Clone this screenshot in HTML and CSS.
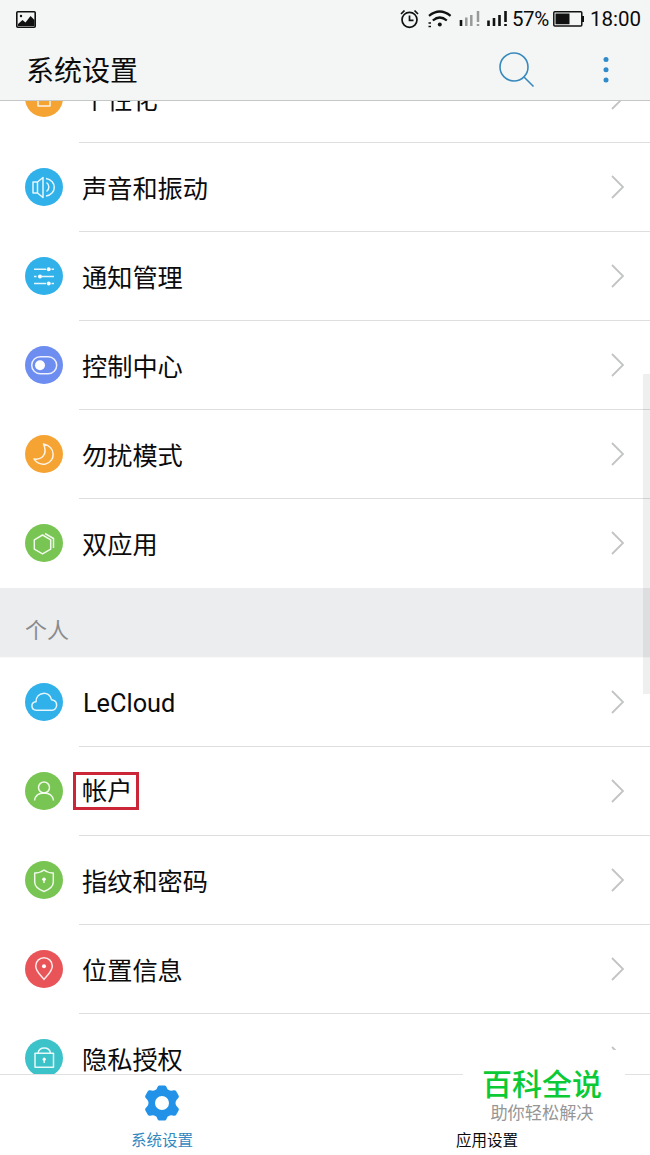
FILE: index.html
```html
<!DOCTYPE html>
<html lang="zh-CN">
<head>
<meta charset="utf-8">
<title>系统设置</title>
<link rel="stylesheet" href="styles.css">
</head>
<body>
<div class="screen">
  <header class="header">
    <div class="status">
      <svg class="photo" width="20" height="17" viewBox="0 0 20 17"><rect x=".8" y=".8" width="18.4" height="15.4" rx="1" fill="none" stroke="#111" stroke-width="1.6"/><circle cx="5" cy="5" r="1.2" fill="#111"/><path d="M2 15V13l4.500-4 3 2.500L14.500 5 18.500 9v6z" fill="#111"/></svg>
      <svg class="status-icons" width="120" height="22" viewBox="0 0 120 22" fill="none" stroke="#111">
        <circle cx="12.500" cy="11.800" r="7.500" stroke-width="1.700"/><path d="M12.500 7.500v4.800h4M4 6l3.500-3.500M21 6l-3.500-3.500" stroke-width="1.700"/>
        <path d="M32 7.800Q42.800-.8 53.600 7.800M35.800 12.500Q42.800 6.500 49.800 12.500" stroke-width="2.200"/><circle cx="42.800" cy="16.500" r="2" fill="#111" stroke="none"/><path d="M31.500 15h2.500M31.500 18.500h2.500" stroke-width="1.500"/>
        <path d="M64 12v6" stroke-width="2.600"/><path d="M69.300 9.500V18M74.300 7V18M81 3v11M81 16v2" stroke="#999" stroke-width="2.500"/>
        <path d="M91.500 12.500V18M97 10v8M102.500 7v11M108.500 3v11M108.500 16v2" stroke-width="2.600"/>
      </svg>
      <span class="percent">57%</span>
      <svg class="battery" width="32" height="16" viewBox="0 0 32 16"><rect x=".8" y=".8" width="28" height="14.200" rx="1" fill="none" stroke="#111" stroke-width="1.500"/><path d="M2.500 2.500h14v10.800h-14zM29 5h2v6h-2z" fill="#111"/></svg>
      <span class="clock">18:00</span>
    </div>
    <div class="title-bar">
      <h1 class="title">系统设置</h1>
      <svg class="search" width="38" height="38" viewBox="0 0 38 38" fill="none" stroke="#3989bd" stroke-width="1.600"><circle cx="16" cy="16" r="14"/><path d="M26 26l9.500 9.500"/></svg>
      <svg class="more" width="6" height="28" viewBox="0 0 6 28" fill="#2f8bca"><circle cx="3" cy="3.500" r="2.500"/><circle cx="3" cy="13.800" r="2.500"/><circle cx="3" cy="24" r="2.500"/></svg>
    </div>
  </header>

  <main class="content">
    <div class="list">
      <div class="row"><svg class="icon orange" viewBox="0 0 38 38"><rect x="13" y="12" width="12" height="15"/></svg><div class="cell"><span class="label">个性化</span><svg class="chevron" viewBox="0 0 14 24"><path d="M1 1l11 11L1 23"/></svg></div></div>
      <div class="row"><svg class="icon blue" viewBox="0 0 38 38"><path d="M8 14h4.500l5.500-4.500v20L12.500 25H8zM12.500 14v11M21.500 14.500a5.500 5.500 0 0 1 0 9M21 10.500c11 1.500 11 16 0 17.500"/></svg><div class="cell"><span class="label">声音和振动</span><svg class="chevron" viewBox="0 0 14 24"><path d="M1 1l11 11L1 23"/></svg></div></div>
      <div class="row"><svg class="icon blue" viewBox="0 0 38 38"><path d="M9 12.300h12M26.500 12.300h2.500M9 19.500h2.500M17 19.500h12M9 26.500h12M26.500 26.500h2.500"/><g fill="#fff" stroke="none"><circle cx="23.700" cy="12.300" r="2"/><circle cx="15" cy="19.500" r="2"/><circle cx="23.700" cy="26.500" r="2"/></g></svg><div class="cell"><span class="label">通知管理</span><svg class="chevron" viewBox="0 0 14 24"><path d="M1 1l11 11L1 23"/></svg></div></div>
      <div class="row"><svg class="icon indigo" viewBox="0 0 38 38"><rect x="6.700" y="10.800" width="25" height="17" rx="8.500"/><circle cx="15" cy="19.300" r="5" fill="#fff" stroke="none"/></svg><div class="cell"><span class="label">控制中心</span><svg class="chevron" viewBox="0 0 14 24"><path d="M1 1l11 11L1 23"/></svg></div></div>
      <div class="row"><svg class="icon orange" viewBox="0 0 38 38"><path d="M18.500 9C31 11.500 31 26.500 20.500 29c-5 1-9.500-1.500-11.500-5 8 1 14-5 9.500-15z"/></svg><div class="cell"><span class="label">勿扰模式</span><svg class="chevron" viewBox="0 0 14 24"><path d="M1 1l11 11L1 23"/></svg></div></div>
      <div class="row last"><svg class="icon green" viewBox="0 0 38 38"><path d="M17.500 11l8.200 4.800v9.300l-8.200 4.800-8.200-4.800v-9.300zM20 9.500l8.500 5V24"/></svg><div class="cell"><span class="label">双应用</span><svg class="chevron" viewBox="0 0 14 24"><path d="M1 1l11 11L1 23"/></svg></div></div>
    </div>
    <h2 class="section">个人</h2>
    <div class="list">
      <div class="row"><svg class="icon blue" viewBox="0 0 38 38"><path d="M11.500 27.200c-6 0-6-8.200-.5-8.500 0-10.500 14-11 15.500-2 7.500 1 6 10.500.5 10.500z"/></svg><div class="cell"><span class="label latin">LeCloud</span><svg class="chevron" viewBox="0 0 14 24"><path d="M1 1l11 11L1 23"/></svg></div></div>
      <div class="row"><svg class="icon green" viewBox="0 0 38 38"><circle cx="19" cy="15.500" r="5.500"/><path d="M9.500 28.500c.7-4.500 4-7.500 9.500-7.500s8.800 3 9.500 7.500"/></svg><div class="cell"><span class="label marked">帐户</span><svg class="chevron" viewBox="0 0 14 24"><path d="M1 1l11 11L1 23"/></svg></div></div>
      <div class="row"><svg class="icon green" viewBox="0 0 38 38"><path d="M19 9q4 3 9.300 3v9c0 4-4 7.500-9.300 9.500-5.300-2-9.300-5.500-9.300-9.500v-9q5.300 0 9.300-3z"/><circle cx="19" cy="18.300" r="1.800" fill="#fff" stroke="none"/><path d="M19 18.500v3.500"/></svg><div class="cell"><span class="label">指纹和密码</span><svg class="chevron" viewBox="0 0 14 24"><path d="M1 1l11 11L1 23"/></svg></div></div>
      <div class="row"><svg class="icon red" viewBox="0 0 38 38"><path d="M19 29.500c-2-3.500-8.300-7.500-8.300-13.500a8.300 8.300 0 0 1 16.600 0c0 6-6.300 10-8.300 13.500z"/><circle cx="19" cy="16.300" r="2" fill="#fff" stroke="none"/></svg><div class="cell"><span class="label">位置信息</span><svg class="chevron" viewBox="0 0 14 24"><path d="M1 1l11 11L1 23"/></svg></div></div>
      <div class="row"><svg class="icon teal" viewBox="0 0 38 38"><path d="M10 14.300h18.500v14H10zM13 14.300c1-7 11.500-7 12.500 0M19.200 20.500v3.500"/><circle cx="19.200" cy="20.200" r="1.600" fill="#fff" stroke="none"/></svg><div class="cell"><span class="label">隐私授权</span><svg class="chevron" viewBox="0 0 14 24"><path d="M1 1l11 11L1 23"/></svg></div></div>
    </div>
    <div class="scrollbar"></div>
  </main>

  <nav class="tabs">
    <div class="tab active"><svg width="36" height="36" viewBox="-18 -18 36 36"><path fill="#2292e8" fill-rule="evenodd" d="M-2.800-17.500h5.600Q4-17.500 4.500-16l1 2.200Q7-12.500 9-12.200l3-.6q1.500-.2 2.200 1l2.400 4.300q.8 1.300-.3 2.400l-1.800 2Q13.500-1.500 13.500 0t1 3.100l1.800 2q1.100 1.100.3 2.400l-2.400 4.300q-.7 1.200-2.200 1l-3-.6q-2 .3-3.500 1.600l-1 2.200q-.5 1.500-1.700 1.500h-5.600q-1.200 0-1.700-1.500l-1-2.200Q-7 12.500-9 12.200l-3 .6q-1.500.2-2.200-1l-2.400-4.300q-.8-1.300.3-2.400l1.800-2Q-13.500 1.500-13.500 0t-1-3.100l-1.800-2q-1.100-1.100-.3-2.400l2.400-4.300q.7-1.200 2.200-1l3 .6q2-.3 3.500-1.600l1-2.200q.5-1.500 1.700-1.500zM0-7a7 7 0 1 0 0 14A7 7 0 0 0 0-7z"/></svg><span>系统设置</span></div>
    <div class="tab"><span>应用设置</span></div>
  </nav>

  <div class="watermark"><strong>百科全说</strong><span>助你轻松解决</span></div>
</div>
</body>
</html>
```
FILE: styles.css
```css
* { box-sizing: border-box; }
body { margin: 0; font-family: Roboto, "Noto Sans CJK SC", sans-serif; color: #0b0b0b; background: #fff; }
svg { display: block; flex: none; }
.screen { position: relative; width: 650px; height: 1155px; display: flex; flex-direction: column; overflow: hidden; }
.header { height: 101px; flex: none; background: #f4f6f6; border-bottom: 1px solid #c6c8c8; }
.status { display: flex; align-items: center; height: 38px; padding: 0 10px 0 16px; font-size: 20.5px; line-height: 38px; }
.status-icons { margin-left: auto; margin-right: -2px; }
.percent { width: 37px; margin-left: -3px; letter-spacing: -.4px; white-space: nowrap; }
.battery { margin-left: 4px; }
.clock { margin-left: 5px; width: 50px; white-space: nowrap; }
.photo { margin-top: 0; }
.title-bar { display: flex; align-items: center; height: 62px; padding: 0 41px 0 26px; }
.title { margin: 0; flex: 1; font-size: 28px; line-height: 40px; font-weight: 400; padding-top: 6px; }
.search { margin-right: 67px; margin-top: 1px; }
.more { margin-top: 2px; }
.content { position: relative; flex: 1; min-height: 0; overflow: hidden; }
.list:first-child { margin-top: -47px; }
.row { display: flex; height: 89px; padding-left: 25px; align-items: center; }
.icon { width: 38px; height: 38px; border-radius: 50%; margin: 0 16px 2px 0; fill: none; stroke: #fff; stroke-opacity: .88; stroke-width: 1.5; stroke-linejoin: round; }
.orange { background: #f5a433; }
.blue { background: #31b1ea; }
.indigo { background: #6d8df0; }
.green { background: #78c553; }
.red { background: #e85458; }
.teal { background: #3cc2c9; }
.cell { flex: 1; height: 89px; display: flex; align-items: center; justify-content: space-between; padding: 0 25px 0 3px; border-bottom: 1px solid #dcdedf; }
.last .cell { border-bottom-color: transparent; }
.label { font-size: 25.2px; line-height: 38px; padding-top: 5px; }
.latin { font-size: 25.3px; padding-top: 3px; margin-left: 1px; }
.marked { border: 3px solid #cb2638; margin-left: -9px; padding: 0 5px 0 6px; height: 38px; line-height: 34px; width: 66px; white-space: nowrap; }
.chevron { width: 14px; height: 24px; fill: none; stroke: #c2c4c4; stroke-width: 1.8; }
.section { margin: 0; height: 70px; padding: 26px 25px 0; background: #ebedee; border-bottom: 1px solid #fafafa; color: #898b8e; font-size: 22px; line-height: 34px; font-weight: 400; }
.scrollbar { position: absolute; top: 273px; right: 0; width: 7px; height: 320px; background: rgba(90, 95, 95, .1); }
.tabs { display: flex; height: 81px; flex: none; background: #fff; border-top: 1px solid #dfe1e2; }
.tab { flex: 1; display: flex; flex-direction: column; align-items: center; justify-content: flex-end; padding: 0 1px 4px 0; font-size: 15.5px; line-height: 20px; gap: 10px; }
.active { color: #3288c0; }
.watermark { position: absolute; left: 463px; top: 1050px; width: 162px; height: 78px; background: #fff; display: flex; flex-direction: column; padding-top: 17px; align-items: center; }
.watermark strong { color: #0bca35; font-size: 30px; line-height: 36px; font-weight: 500; margin-left: -4px; }
.watermark span { color: #969696; font-size: 17.2px; line-height: 20px; margin-left: -4px; }
```
